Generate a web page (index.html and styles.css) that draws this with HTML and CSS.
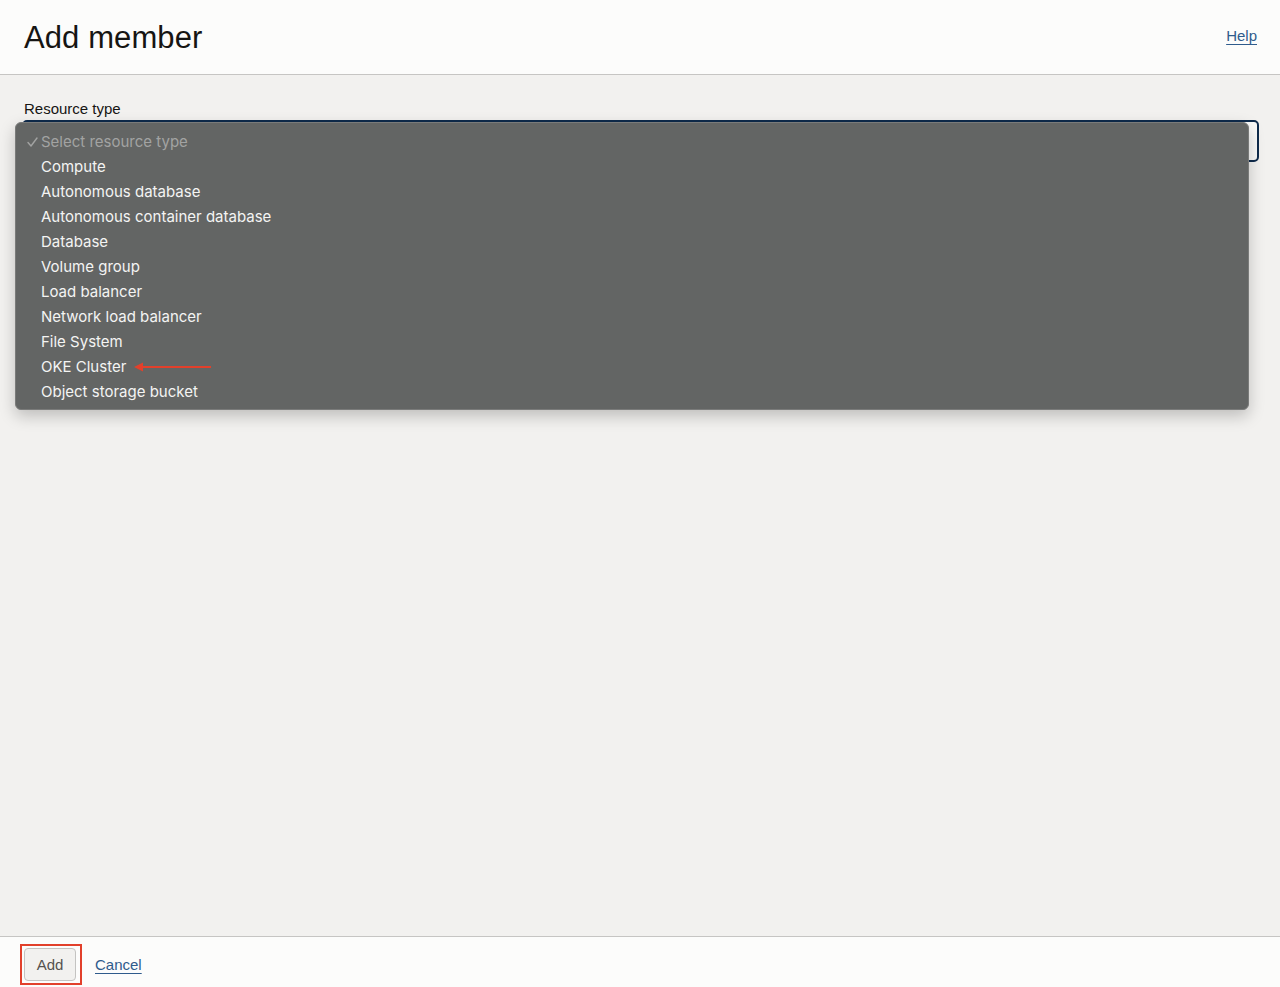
FILE: index.html
```html
<!DOCTYPE html>
<html lang="en">
	<head>
		<meta charset="UTF-8" />
		<meta name="viewport" content="width=device-width, initial-scale=1.0" />
		<title>Add member</title>
		<link rel="stylesheet" href="styles.css">
	</head>
	<body>
		<div class="page">
			<header class="header">
				<h1>Add member</h1>
				<a href="#" class="help">Help</a>
			</header>

			<main class="content">
				<div class="form-group">
					<label for="resourceType">Resource type</label>
					<div class="select-wrap">
						<div id="resourceType" class="select-box"></div>
						<ul class="menu">
							<li class="placeholder">
								<svg class="check" width="11" height="10" viewBox="0 0 11 10">
									<polyline points="1,5.5 4,9 10,1" fill="none" stroke="#a2a3a2" stroke-width="1.4" stroke-linecap="round" stroke-linejoin="round" />
								</svg>
								Select resource type
							</li>
							<li>Compute</li>
							<li>Autonomous database</li>
							<li>Autonomous container database</li>
							<li>Database</li>
							<li>Volume group</li>
							<li>Load balancer</li>
							<li>Network load balancer</li>
							<li>File System</li>
							<li class="marked">OKE Cluster
								<svg class="arrow" width="80" height="10" viewBox="0 0 80 10">
									<line x1="6" y1="5" x2="77" y2="5" stroke="#e2402b" stroke-width="2" />
									<polygon points="0,5 9,0.5 9,9.5" fill="#e2402b" />
								</svg>
							</li>
							<li>Object storage bucket</li>
						</ul>
					</div>
				</div>
			</main>

			<footer class="footer">
				<div class="highlight">
					<button class="btn" type="button">Add</button>
				</div>
				<a href="#" class="cancel">Cancel</a>
			</footer>
		</div>
	</body>
</html>
```

FILE: styles.css
```css
html, body {
	margin: 0;
	height: 100%;
}
body {
	font-family: "Liberation Sans", Arial, sans-serif;
	background-color: #f2f1ef;
	color: #161513;
}
.page {
	display: flex;
	flex-direction: column;
	height: 100vh;
}
.header {
	display: flex;
	justify-content: space-between;
	align-items: center;
	height: 74px;
	padding: 0 23px 0 24px;
	background-color: #fcfcfb;
	border-bottom: 1px solid #c6c5c3;
}
.header h1 {
	margin: 0;
	font-size: 31px;
	font-weight: normal;
	letter-spacing: 0.1px;
	color: #161513;
	padding-top: 2px;
}
.help {
	font-size: 15px;
	color: #2f5b8c;
	text-decoration: underline;
	text-underline-offset: 3px;
	margin-bottom: 3px;
}
.content {
	flex: 1;
	padding: 25px 21px 0 22px;
}
.form-group label {
	display: block;
	font-size: 15px;
	margin: 0 0 3px 2px;
	color: #161513;
}
.select-wrap {
	position: relative;
}
.select-box {
	height: 38px;
	border: 2px solid #0e2a4b;
	border-radius: 5px;
	background-color: #f9f9f8;
}
.menu {
	position: absolute;
	top: 2px;
	left: -7px;
	right: 10px;
	list-style-type: none;
	margin: 0;
	padding: 6px 0 5px 0;
	background-color: #636564;
	border: 1px solid #7a7b7a;
	border-radius: 6px;
	box-shadow: 0 6px 16px rgba(0, 0, 0, 0.22);
	font-family: Inter, "Liberation Sans", sans-serif;
	font-size: 15px;
}
.menu li {
	display: flex;
	align-items: center;
	height: 25px;
	padding-left: 25px;
	color: #f4f4f3;
	position: relative;
}
.menu li.placeholder {
	color: #a2a3a2;
}
.check {
	position: absolute;
	left: 11px;
	top: 8px;
}
.arrow {
	margin-left: 8px;
}
.footer {
	box-sizing: border-box;
	display: flex;
	align-items: center;
	height: 51px;
	padding: 4px 0 0 20px;
	background-color: #fcfcfb;
	border-top: 1px solid #c6c5c3;
}
.highlight {
	border: 2px solid #e2402b;
	padding: 2px 4px 2px 2px;
	display: flex;
}
.btn {
	width: 52px;
	height: 33px;
	background-color: #f2f1ef;
	border: 1px solid #c4c3c1;
	border-radius: 4px;
	font-family: "Liberation Sans", Arial, sans-serif;
	font-size: 15px;
	color: #55524e;
}
.cancel {
	margin-left: 13px;
	font-size: 15px;
	color: #2f5b8c;
	text-decoration: underline;
	text-underline-offset: 3px;
}
```
